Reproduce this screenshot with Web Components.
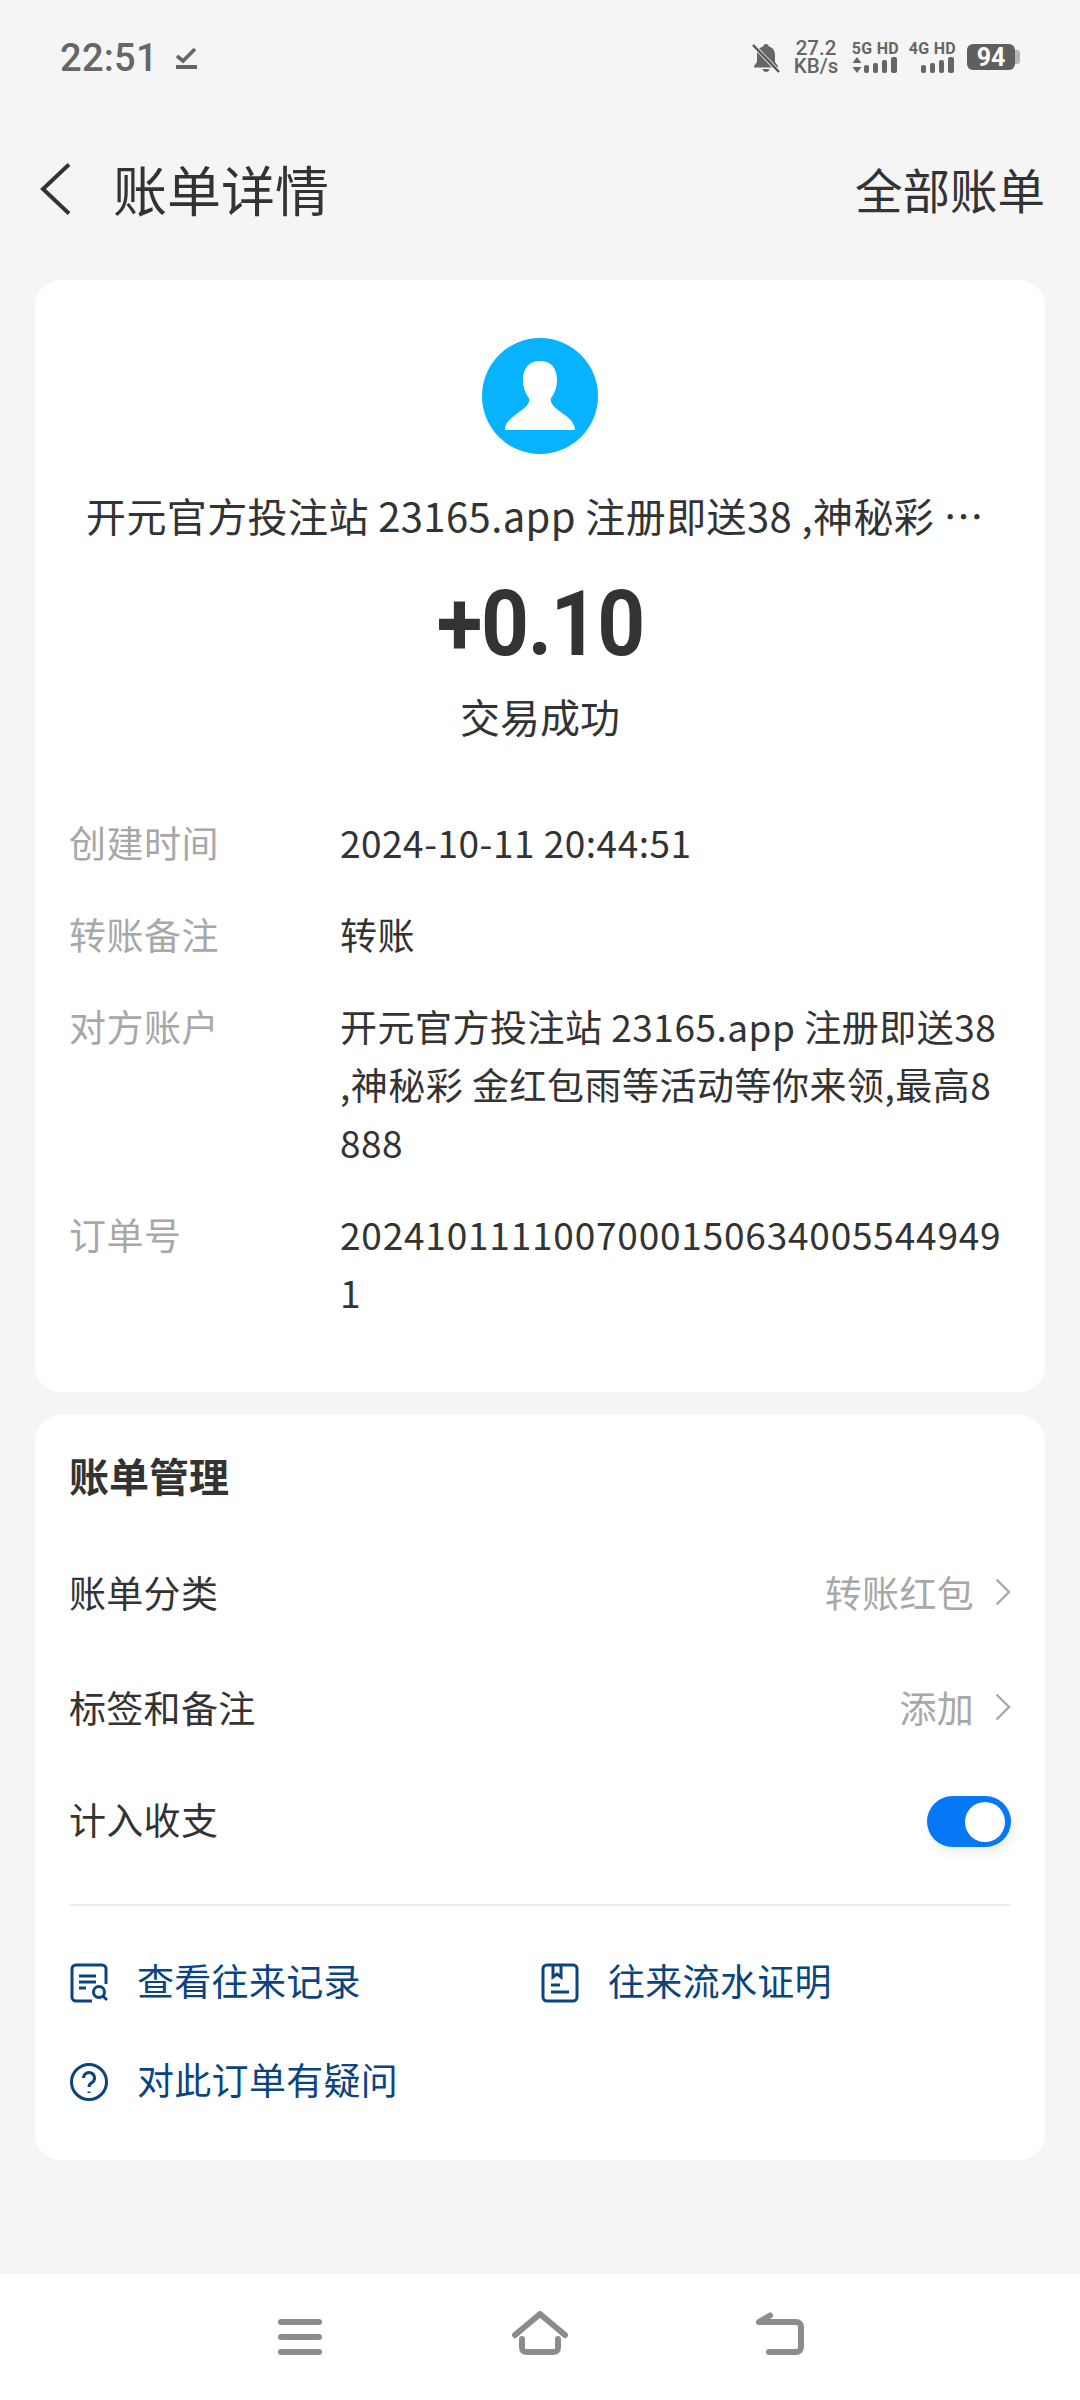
<!DOCTYPE html>
<html lang="zh-CN">
<head>
<meta charset="utf-8">
<title>账单详情</title>
<style>
html, body { margin: 0; padding: 0; }
body {
   background: #f5f5f5;
   font-family: "Noto Sans CJK SC", Roboto, sans-serif;
   color: #333;
   width: 1080px;
   height: 2400px;
   overflow: hidden;
}
</style>
</head>
<body>
<bill-page>
   <status-bar slot="top"></status-bar>
   <nav-header slot="top" title="账单详情" action="全部账单"></nav-header>

   <bill-card>
      <bill-summary name="开元官方投注站 23165.app 注册即送38 ,神秘彩 …" amount="+0.10" state="交易成功"></bill-summary>
      <detail-row label="创建时间">2024-10-11 20:44:51</detail-row>
      <detail-row label="转账备注">转账</detail-row>
      <detail-row label="对方账户">开元官方投注站 23165.app 注册即送38 ,神秘彩 金红包雨等活动等你来领,最高8888</detail-row>
      <detail-row label="订单号" style="--value-spacing:.8px">20241011110070001506340055449491</detail-row>
   </bill-card>

   <manage-card title="账单管理">
      <manage-row style="height:115px" label="账单分类" value="转账红包"></manage-row>
      <manage-row style="height:115px" label="标签和备注" value="添加"></manage-row>
      <manage-row style="height:110px" label="计入收支"><bill-toggle slot="control"></bill-toggle></manage-row>
      <link-item slot="links" icon="records">查看往来记录</link-item>
      <link-item slot="links" icon="proof">往来流水证明</link-item>
      <link-item slot="links" icon="help">对此订单有疑问</link-item>
   </manage-card>

   <bottom-nav slot="bottom"></bottom-nav>
</bill-page>

<script>
// small helper, every element just sets its markup once
class Shadowed extends HTMLElement {
   constructor() {
      super();
      this.attachShadow({ mode: 'open' });
   }
   render(html) {
      this.shadowRoot.innerHTML = html;
   }
}

customElements.define('bill-page', class extends Shadowed {
   connectedCallback() {
      this.render(`
<style>
:host { display: flex; flex-direction: column; height: 2400px; }
.cards { display: flex; flex-direction: column; gap: 23px; padding: 0 35px; }
.bottom { margin-top: auto; }
</style>
<slot name="top"></slot>
<div class="cards"><slot></slot></div>
<div class="bottom"><slot name="bottom"></slot></div>`);
   }
});

customElements.define('status-bar', class extends Shadowed {
   connectedCallback() {
      this.render(`
<style>
:host { display: flex; height: 116px; box-sizing: border-box; padding: 38px 60px 0 60px; justify-content: space-between; align-items: flex-start; color: #666; font-family: Roboto, sans-serif; }
.left { display: flex; align-items: center; gap: 18px; }
.left svg { margin-top: -2px; }
.time { font-size: 38px; font-weight: 500; line-height: 40px; letter-spacing: .3px; }
.right { display: flex; align-items: flex-start; }
.speed { margin-left: 13px; width: 46px; font-size: 20.500px; line-height: 18px; font-weight: 500; text-align: center; padding-top: 1px; }
.net { margin-left: 12px; width: 48px; display: flex; flex-direction: column; align-items: flex-end; }
.net + .net { margin-left: 9px; }
.net span { font-size: 16px; font-weight: 700; line-height: 17px; white-space: nowrap; padding-top: 2px; letter-spacing: .3px; }
.batt { margin: 6px 0 0 11px; display: flex; align-items: center; }
.cell { width: 48px; height: 26px; border-radius: 6px; background: #5f5f5f; color: #fff; font-size: 25px; font-weight: 700; line-height: 27px; text-align: center; }
.tip { width: 5px; height: 14px; background: #b4b4b4; border-radius: 0 3px 3px 0; }
svg { display: block; }
</style>
<div class="left">
   <div class="time">22:51</div>
   <svg width="21" height="25" viewBox="0 0 21 25"><path d="M1 11l6 5L19 4" fill="none" stroke="#666" stroke-width="3.6"/><rect x="0" y="20" width="21" height="4" fill="#666"/></svg>
</div>
<div class="right">
   <svg style="margin-top:5px" width="28" height="30" viewBox="0 0 28 30">
      <path d="M14 1c-1.600 0-2.600 1-2.800 2.500C6.800 4.600 5 8 5 12v7l-3 4v1.500h24V23l-3-4v-7c0-4-1.800-7.400-6.200-8.500C16.600 2 15.600 1 14 1zM10.500 26c.4 2 1.800 3 3.500 3s3.100-1 3.500-3z" fill="#666"/>
      <path d="M1 2l26 27" stroke="#f5f5f5" stroke-width="4"/>
      <path d="M1 2l26 27" stroke="#555" stroke-width="2.400"/>
   </svg>
   <div class="speed">27.2 KB/s</div>
   <div class="net"><span>5G HD</span>
      <svg width="48" height="17" viewBox="0 0 48 17" fill="#666"><path d="M6 0l4.500 6h-9zM1.500 10h9L6 16z"/><rect x="13" y="8" width="5" height="8" rx="2"/><rect x="22" y="6" width="5" height="10" rx="2"/><rect x="31" y="3" width="5" height="13" rx="2"/><rect x="40" y="0" width="6" height="16" rx="2"/></svg>
   </div>
   <div class="net"><span>4G HD</span>
      <svg width="48" height="17" viewBox="0 0 48 17" fill="#666"><rect x="13" y="8" width="5" height="8" rx="2"/><rect x="22" y="6" width="5" height="10" rx="2"/><rect x="31" y="3" width="5" height="13" rx="2"/><rect x="40" y="0" width="6" height="16" rx="2"/></svg>
   </div>
   <div class="batt"><div class="cell">94</div><div class="tip"></div></div>
</div>`);
   }
});

customElements.define('nav-header', class extends Shadowed {
   connectedCallback() {
      this.render(`
<style>
:host { display: flex; align-items: center; height: 146px; box-sizing: border-box; padding: 0 35px 0 40px; margin-bottom: 18px; }
svg { display: block; flex: none; }
.title { font-size: 54px; line-height: 70px; margin-left: 43px; flex: 1; color: #333; }
.action { font-size: 47.500px; line-height: 70px; color: #333; }
</style>
<svg width="30" height="52" viewBox="0 0 30 52"><path d="M29 1.500L3 26l26 24.500" fill="none" stroke="#333" stroke-width="4"/></svg>
<div class="title">${this.getAttribute('title')}</div>
<div class="action">${this.getAttribute('action')}</div>`);
   }
});

customElements.define('bill-card', class extends Shadowed {
   connectedCallback() {
      this.render(`
<style>
:host { display: block; background: #fff; border-radius: 26px; height: 1112px; box-sizing: border-box; padding-top: 58px; }
</style>
<slot></slot>`);
   }
});

customElements.define('bill-summary', class extends Shadowed {
   connectedCallback() {
      this.render(`
<style>
:host { display: flex; flex-direction: column; align-items: center; margin-bottom: 70px; }
svg { display: block; }
.name { font-size: 40px; letter-spacing: .4px; line-height: 50px; margin-top: 36px; padding-right: 10px; white-space: nowrap; color: #333; }
.amount { font-family: Roboto, sans-serif; font-size: 90px; font-weight: 700; line-height: 90px; margin-top: 40px; color: #333; transform: scaleX(.93); letter-spacing: -1.500px; }
.state { font-size: 40px; line-height: 54px; margin-top: 19px; color: #333; }
</style>
<svg width="116" height="116" viewBox="0 0 116 116">
   <circle cx="58" cy="58" r="58" fill="#07b2fe"/>
   <path d="M58 23C47 23 41 30 41 42C41 50 44 56 47 60C48 65 45 68 40 72C32 78 23 83 23 92L93 92C93 83 84 78 76 72C71 68 68 65 69 60C72 56 75 50 75 42C75 30 69 23 58 23Z" fill="#fff"/>
</svg>
<div class="name">${this.getAttribute('name')}</div>
<div class="amount">${this.getAttribute('amount')}</div>
<div class="state">${this.getAttribute('state')}</div>`);
   }
});

customElements.define('detail-row', class extends Shadowed {
   connectedCallback() {
      this.render(`
<style>
:host { display: flex; padding: 0 34px; margin-bottom: 34px; font-size: 37px; line-height: 58px; letter-spacing: .5px; }
.label { width: 271px; flex: none; color: #a8a8a8; }
.value { flex: 1; min-width: 0; color: #333; word-break: break-all; letter-spacing: var(--value-spacing, .5px); }
</style>
<div class="label">${this.getAttribute('label')}</div>
<div class="value"><slot></slot></div>`);
   }
});

customElements.define('manage-card', class extends Shadowed {
   connectedCallback() {
      this.render(`
<style>
:host { display: block; background: #fff; border-radius: 26px; height: 745px; box-sizing: border-box; padding: 30px 34px 0; }
.title { font-size: 40px; font-weight: 700; line-height: 60px; margin-bottom: 29px; color: #333; }
.rows { display: flex; flex-direction: column; }
hr { border: 0; height: 2px; background: #ececec; margin: 30px 0 0; }
.links { display: grid; grid-template-columns: 471px 1fr; grid-auto-rows: 99px; margin-top: 24px; }
</style>
<div class="title">${this.getAttribute('title')}</div>
<div class="rows"><slot></slot></div>
<hr>
<div class="links"><slot name="links"></slot></div>`);
   }
});

customElements.define('manage-row', class extends Shadowed {
   connectedCallback() {
      let value = this.getAttribute('value');
      this.render(`
<style>
:host { display: flex; align-items: center; justify-content: space-between; font-size: 37px; letter-spacing: .3px; color: #333; }
.end { display: flex; align-items: center; gap: 21px; color: #a8a8a8; }
svg { display: block; }
</style>
<div>${this.getAttribute('label')}</div>
<slot name="control">
   <div class="end">${value}<svg width="16" height="28" viewBox="0 0 16 28"><path d="M1.500 1.500L14 14 1.500 26.500" fill="none" stroke="#a8a8a8" stroke-width="2.400"/></svg></div>
</slot>`);
   }
});

customElements.define('bill-toggle', class extends Shadowed {
   connectedCallback() {
      this.render(`
<style>
:host { display: flex; justify-content: flex-end; align-items: center; width: 84px; height: 51px; margin-top: 5px; box-sizing: border-box; padding-right: 6px; border-radius: 26px; background: #0478f5; box-shadow: 3px 6px 12px rgba(0,0,0,.08); }
i { display: block; width: 40px; height: 40px; border-radius: 50%; background: #fff; }
</style>
<i></i>`);
   }
});

const linkIcons = {
   records: `<path d="M36 21V6a4 4 0 0 0-4-4H6a4 4 0 0 0-4 4v28a4 4 0 0 0 4 4h16" /><path d="M9 13h17M9 19h17M9 25h7" /><circle cx="29" cy="29" r="5.500" /><path d="M33 33l4 4" />`,
   proof: `<rect x="2" y="2" width="34" height="36" rx="4" /><path d="M12 2v12l4-3 4 3V2M10 22h9M10 29h18" />`,
   help: `<circle cx="19" cy="20" r="17.500" /><path d="M13.500 16a5.500 5.500 0 1 1 8.500 4.600c-2 1.300-3 2.200-3 4.400" /><path d="M19 29.500v1.500" />`
};

customElements.define('link-item', class extends Shadowed {
   connectedCallback() {
      let icon = linkIcons[this.getAttribute('icon')];
      this.render(`
<style>
:host { display: flex; align-items: center; gap: 29px; font-size: 37px; letter-spacing: .3px; color: #0b457f; }
svg { display: block; flex: none; fill: none; stroke: #0b457f; stroke-width: 3; margin: 6px 0 0 1px; }
</style>
<svg width="38" height="40" viewBox="0 0 38 40">${icon}</svg>
<div><slot></slot></div>`);
   }
});

customElements.define('bottom-nav', class extends Shadowed {
   connectedCallback() {
      this.render(`
<style>
:host { display: flex; height: 126px; box-sizing: border-box; padding: 37px 0 0 278px; background: #fff; align-items: flex-start; }
svg { display: block; flex: none; fill: none; stroke: #8c8c8c; stroke-width: 6; stroke-linecap: round; stroke-linejoin: round; }
</style>
<svg width="44" height="46" viewBox="0 0 44 46"><path d="M3 11h38M3 26h38M3 41h38"/></svg>
<svg width="56" height="46" viewBox="0 0 56 46" style="margin-left:190px"><path d="M3 24L28 3l25 21M10 28v8c0 4 1 5 5 5h26c4 0 5-1 5-5v-8"/></svg>
<svg width="48" height="46" viewBox="0 0 48 46" style="margin-left:188px"><path d="M3 11h37c3 0 5 2 5 5v20c0 3-2 5-5 5H13M3 11l11-6.500"/></svg>`);
   }
});
</script>
</body>
</html>
